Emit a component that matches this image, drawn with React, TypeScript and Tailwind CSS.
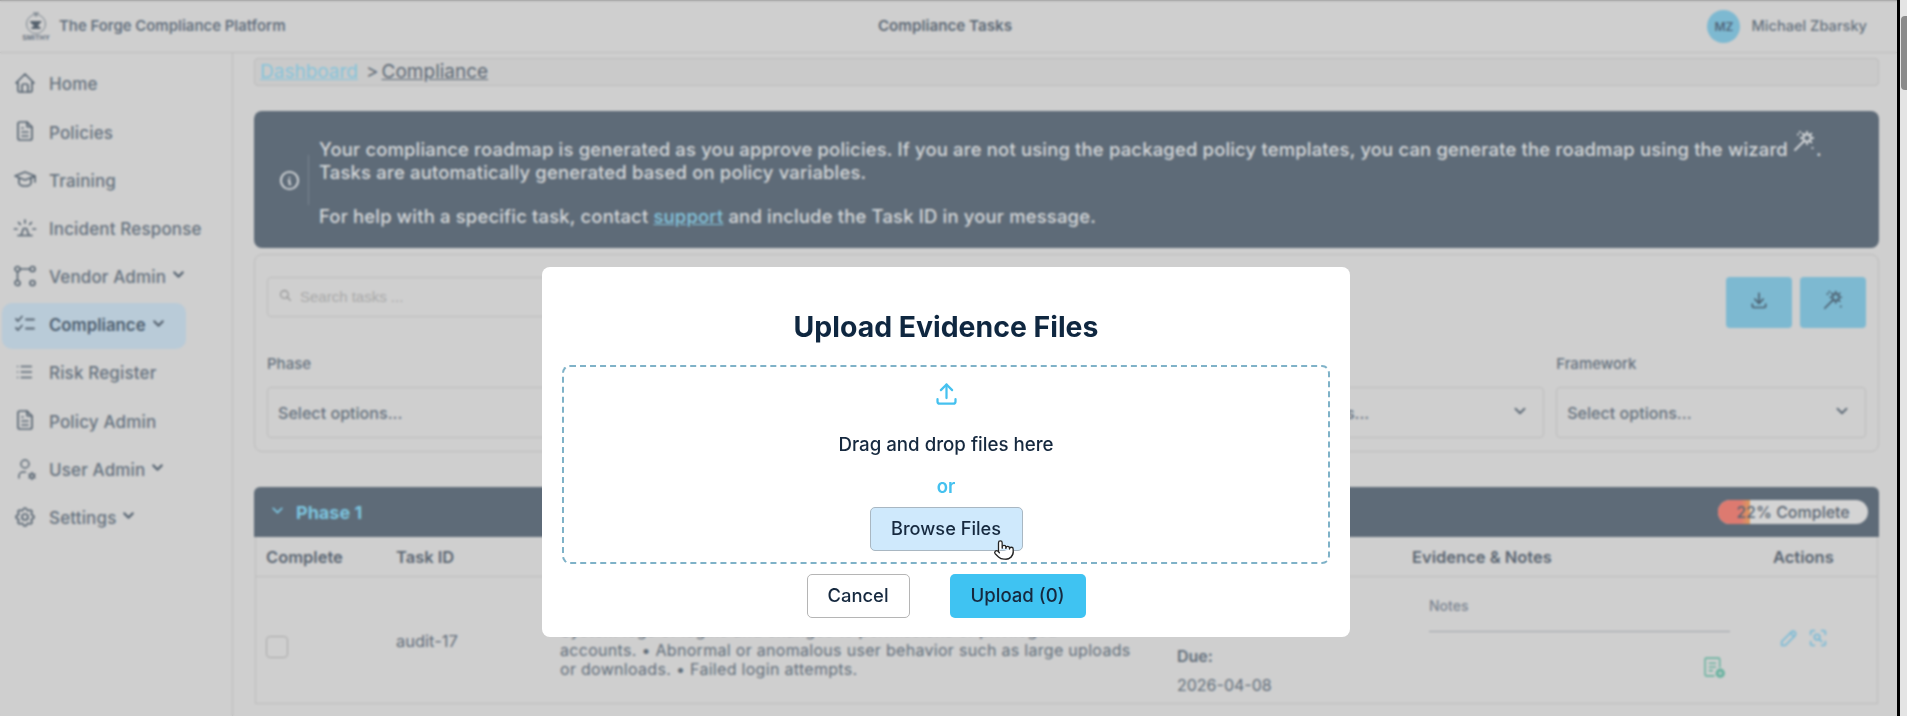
import React from 'react';
import { Pointer } from 'lucide-react';
import {
  TbChevronDown,
  TbDownload,
  TbFileText,
  TbHome,
  TbInfoCircle,
  TbList,
  TbPencil,
  TbSchool,
  TbSearch,
  TbSettings,
  TbUpload,
  TbUserCog,
  TbZoomScan,
} from 'react-icons/tb';

const FONT = "font-['Inter','Noto_Sans',sans-serif]";

function RouteIcon({ size = 24 }: { size?: number }) {
  return (
    <svg width={size} height={size} viewBox="0 0 24 24" fill="none" stroke="currentColor" strokeWidth="1.7">
      <circle cx="4.5" cy="5" r="2.5" />
      <circle cx="19.5" cy="5" r="2.5" />
      <circle cx="4.5" cy="19" r="2.5" />
      <circle cx="19.5" cy="19" r="2.5" />
      <path d="M7 5h10M4.5 7.5v9" />
    </svg>
  );
}

function SirenIcon() {
  return (
    <svg width="24" height="24" viewBox="0 0 24 24" fill="none" stroke="currentColor" strokeWidth="1.7" strokeLinecap="round">
      <path d="M1.5 13h2.5M20 13h2.5M12 4v3M5.5 6.5l1.8 1.8M18.5 6.5l-1.8 1.8M5 19.5h14M8 19.5l2.5-7h3l2.5 7" />
    </svg>
  );
}

function ChecksIcon() {
  return (
    <svg width="24" height="24" viewBox="0 0 24 24" fill="none" stroke="currentColor" strokeWidth="1.8" strokeLinecap="round" strokeLinejoin="round">
      <path d="M3 7l2 2 4-4.5M3 16l2 2 4-4.5M13 7.5h8M13 16.5h8" />
    </svg>
  );
}

function WandIcon({ size = 22 }: { size?: number }) {
  return (
    <svg width={size} height={size} viewBox="0 0 24 24" fill="none" stroke="currentColor" strokeWidth="1.4" strokeLinecap="round" strokeLinejoin="round">
      <path d="M3 21l8.5-8.5" strokeWidth="1.8" />
      <path d="M15 2.5l1.07 3.91 3.53-2.01-2.01 3.53 3.91 1.07-3.91 1.07 2.01 3.53-3.53-2.01-1.07 3.91-1.07-3.91-3.53 2.01 2.01-3.53-3.91-1.07 3.91-1.07-2.01-3.53 3.53 2.01z" />
      <path d="M6 5.5h.01M20.5 19h.01M8 3h.01" strokeWidth="2.2" />
    </svg>
  );
}

function SmithyLogo() {
  return (
    <div className="flex w-[26px] flex-col items-center">
      <svg width="24" height="24" viewBox="0 0 24 24" fill="none" stroke="#66727f" strokeWidth="1">
        <circle cx="12" cy="13" r="9.5" strokeWidth="0.8" />
        <path d="M9 2h6M12 2v4" />
        <path d="M6 10h12l-3.5 4v2h2v2h-9v-2h2v-2c-1.5-.5-3-2-3.5-4z" fill="#56626e" stroke="none" />
      </svg>
      <span className="-mt-[1px] text-[7px] leading-[8px] font-bold tracking-[0.2px] text-[#66727f] font-['Liberation_Sans_Narrow','Liberation_Sans',sans-serif]">
        SMITHY
      </span>
    </div>
  );
}

function NoteIcon() {
  return (
    <svg width="23" height="23" viewBox="0 0 22 22" fill="none" stroke="#69b3a0" strokeWidth="1.5">
      <path d="M16 11V3a1 1 0 0 0-1-1H3a1 1 0 0 0-1 1v15a1 1 0 0 0 1 1h8" />
      <path d="M5.5 7h7M5.5 10.5h7M5.5 14h4" />
      <circle cx="16.5" cy="16.5" r="4.5" fill="#69b3a0" stroke="none" />
      <path d="M16.5 14.5v4M14.5 16.5h4" stroke="#cfcfcf" strokeWidth="1" />
    </svg>
  );
}

const NAV = [
  { label: 'Home', icon: <TbHome size={24} strokeWidth={1.7} /> },
  { label: 'Policies', icon: <TbFileText size={24} strokeWidth={1.7} /> },
  { label: 'Training', icon: <TbSchool size={24} strokeWidth={1.7} /> },
  { label: 'Incident Response', icon: <SirenIcon /> },
  { label: 'Vendor Admin', icon: <RouteIcon />, caret: true },
  { label: 'Compliance', icon: <ChecksIcon />, caret: true, active: true },
  { label: 'Risk Register', icon: <TbList size={22} strokeWidth={1.7} /> },
  { label: 'Policy Admin', icon: <TbFileText size={24} strokeWidth={1.7} /> },
  { label: 'User Admin', icon: <TbUserCog size={24} strokeWidth={1.5} />, caret: true },
  { label: 'Settings', icon: <TbSettings size={24} strokeWidth={1.7} />, caret: true },
];

const FILTERS = ['Phase', 'Status', 'Owner', 'Category', 'Framework'];

function Sidebar() {
  return (
    <aside className="flex w-[233px] shrink-0 flex-col border-r border-[#bcbcbc] pt-[8px] pl-[2px]">
      {NAV.map((item) => (
        <div key={item.label} className="flex h-[48.2px] items-center">
          <div
            className={`flex h-[46px] items-center rounded-[10px] pl-[11px] pr-[19px] ${
              item.active ? 'bg-[#b9cbd8] font-semibold text-[#4d5e6f]' : 'font-medium text-[#66727e]'
            }`}
          >
            <span className="-mt-[4px] flex w-[36px] shrink-0 text-[#5a6774]">{item.icon}</span>
            <span className={`whitespace-nowrap ${item.active ? 'text-[16.8px]' : 'text-[17px] tracking-[0.15px]'}`}>{item.label}</span>
            {item.caret && <TbChevronDown size={17} strokeWidth={3} className="mb-[6px] ml-[4px] text-[#5a6774]" />}
          </div>
        </div>
      ))}
    </aside>
  );
}

function AlertBanner() {
  return (
    <div className="mt-[25px] flex h-[137px] rounded-[8px] bg-[#5e6b78] pt-[27px] pl-[26px] text-[18.4px] leading-[23px] font-medium tracking-[0.2px] text-[#d5d8da]">
      <div className="mt-[17px] flex h-[50px] w-[29px] shrink-0 items-center border-r border-[#79858f]">
        <TbInfoCircle size={23} className="-ml-[2px]" />
      </div>
      <div className="pl-[10px]">
        <p className="flex h-[23px] items-start whitespace-nowrap">
          Your compliance roadmap is generated as you approve policies. If you are not using the packaged policy templates, you can generate the roadmap using the wizard
          <span className="-mt-[9px] ml-[4px] flex">
            <WandIcon size={24} />
          </span>
          <span>.</span>
        </p>
        <p>Tasks are automatically generated based on policy variables.</p>
        <p className="mt-[21px]">
          For help with a specific task, contact <span className="text-[#83c3dc] underline">support</span> and include the Task ID in your message.
        </p>
      </div>
    </div>
  );
}

function FilterCard() {
  return (
    <div className="mt-[6px] h-[198px] rounded-[8px] border border-[#bcbcbc] px-[12px] pt-[22px]">
      <div className="flex items-start justify-between">
        <div className="flex h-[40px] w-[400px] items-center rounded-[4px] border border-[#bcbcbc] pl-[11px] text-[15px] text-[#a9a9a9] font-['Liberation_Sans',sans-serif]">
          <TbSearch size={13} className="mr-[8px] mb-[3px] text-[#8c8c8c]" />
          Search tasks ...
        </div>
        <div className="flex gap-[8px]">
          <div className="flex h-[51px] w-[66px] items-center justify-center rounded-[4px] bg-[#7db9d1] pb-[5px] text-[#4d6070]">
            <TbDownload size={20} />
          </div>
          <div className="flex h-[51px] w-[66px] items-center justify-center rounded-[4px] bg-[#7db9d1] pb-[5px] text-[#4d6070]">
            <WandIcon size={22} />
          </div>
        </div>
      </div>
      <div className="mt-[24px] grid grid-cols-5 gap-x-[12.5px]">
        {FILTERS.map((name) => (
          <div key={name}>
            <div className="h-[24px] text-[15px] font-medium leading-[24px] text-[#66727e]">{name}</div>
            <div className="mt-[11px] flex h-[51px] items-center justify-between rounded-[4px] border border-[#bcbcbc] pt-[1px] pr-[14px] pl-[10px] text-[16.1px] font-medium text-[#66727e]">
              Select options...
              <TbChevronDown size={18} strokeWidth={2.5} className="mb-[4px] text-[#5f6c79]" />
            </div>
          </div>
        ))}
      </div>
    </div>
  );
}

function PhaseTable() {
  const cols = 'grid grid-cols-[130px_164px_617px_235px_361px_1fr] px-[10px]';
  return (
    <div className="mt-[35px]">
      <div className="flex h-[50px] items-center justify-between rounded-t-[6px] bg-[#5e6b78] pr-[11px] pl-[15px]">
        <div className="flex items-center">
          <TbChevronDown size={17} strokeWidth={2.5} className="mb-[3px] text-[#7cc4df]" />
          <span className="ml-[10px] text-[18px] font-bold text-[#7cc4df]">Phase 1</span>
        </div>
        <div className="relative h-[24px] w-[150px] overflow-hidden rounded-full bg-[#d4d4d4]">
          <div className="h-full w-[32px] bg-gradient-to-r from-[#dd7a70] from-70% to-[#dc9a5c]" />
          <div className="absolute inset-0 flex items-center justify-center text-[16px] font-medium text-[#5b6672]">22% Complete</div>
        </div>
      </div>
      <div className="mx-[1px] border-x border-[#bcbcbc]">
        <div className={`${cols} h-[40px] items-center border-b border-[#bcbcbc] pt-[2px] text-[16.5px] font-semibold text-[#5b6672]`}>
          <span>Complete</span>
          <span>Task ID</span>
          <span>Description</span>
          <span>Dates</span>
          <span>Evidence &amp; Notes</span>
          <span>Actions</span>
        </div>
        <div className={`${cols} h-[127px] border-b border-[#bcbcbc] text-[16px] text-[#626e7a]`}>
          <div className="pt-[59px]">
            <div className="h-[22px] w-[22px] rounded-[4px] border border-[#a9a9a9]" />
          </div>
          <div className="pt-[52px] text-[16.5px]">audit-17</div>
          <div className="pt-[44px] text-[16px] leading-[19.6px] tracking-[0.3px] whitespace-nowrap">
            <p>System logs of logins and changes to permissions of privileged</p>
            <p>accounts. • Abnormal or anomalous user behavior such as large uploads</p>
            <p>or downloads. • Failed login attempts.</p>
          </div>
          <div className="pt-[67px] text-[16px]">
            <div className="font-semibold">Due:</div>
            <div className="mt-[5px]">2026-04-08</div>
          </div>
          <div className="pt-[18px] pr-[43px] pl-[17px]">
            <div className="h-[37px] border-b border-[#9ea4aa] text-[14px] font-medium text-[#7b8591]">Notes</div>
            <div className="mt-[24px] flex justify-end pr-[4px]">
              <NoteIcon />
            </div>
          </div>
          <div className="flex gap-[7px] pt-[50px] pl-[5px] text-[#7fbcd6]">
            <TbPencil size={22} />
            <TbZoomScan size={22} />
          </div>
        </div>
      </div>
    </div>
  );
}

function UploadModal() {
  return (
    <div className="absolute top-[267px] left-[542px] flex h-[370px] w-[808px] flex-col items-center rounded-[8px] bg-white px-[20px] pt-[42px] blur-[0.3px]">
      <h2 className="text-[28.4px] leading-[36px] font-bold text-[#0f2740]">Upload Evidence Files</h2>
      <div className="mt-[20px] flex h-[199px] w-full flex-col items-center rounded-[8px] border-2 border-dashed border-[#7fb2c8] pt-[13px]">
        <TbUpload size={27} className="text-[#45c1ef]" />
        <div className="mt-[25px] text-[18.7px] leading-[26px] font-medium text-[#16293f]">Drag and drop files here</div>
        <div className="mt-[15px] text-[18.5px] leading-[26px] font-semibold text-[#45c1ef]">or</div>
        <div className="relative mt-[8px] flex h-[44px] w-[153px] items-center justify-center rounded-[5px] border border-[#a9b7c2] bg-[#cfe9fc] text-[18.2px] font-medium text-[#16293f]">
          Browse Files
          <Pointer size={22} fill="white" strokeWidth={1.4} className="absolute top-[31px] left-[122px] text-[#222]" />
        </div>
      </div>
      <div className="mt-[10px] flex gap-[40px]">
        <div className="flex h-[44px] w-[103px] items-center justify-center rounded-[5px] border border-[#b5b5b5] bg-white text-[18.4px] font-medium text-[#16293f]">
          Cancel
        </div>
        <div className="flex h-[44px] w-[136px] items-center justify-center rounded-[5px] bg-[#3fc3f2] text-[18.6px] font-medium text-[#16293f]">
          Upload (0)
        </div>
      </div>
    </div>
  );
}

export default function App() {
  return (
    <div className={`relative flex h-[716px] w-full overflow-hidden bg-[#cfcfcf] ${FONT}`}>
      <div className="flex min-w-0 flex-1 flex-col">
        <header className="grid h-[53px] shrink-0 grid-cols-3 items-center border-t border-b border-t-[#9c9c9c] border-b-[#bcbcbc] pr-[30px] pl-[23px]">
          <div className="flex items-center gap-[10px]">
            <SmithyLogo />
            <span className="text-[14.9px] font-semibold text-[#66727f]">The Forge Compliance Platform</span>
          </div>
          <div className="text-center text-[15.2px] font-semibold text-[#5d6975]">Compliance Tasks</div>
          <div className="flex items-center justify-end gap-[11px]">
            <div className="flex h-[33px] w-[33px] items-center justify-center rounded-full bg-[#7db9d1] text-[12px] font-semibold text-[#52687c]">MZ</div>
            <span className="text-[14.6px] font-medium text-[#66727e]">Michael Zbarsky</span>
          </div>
        </header>
        <div className="flex min-h-0 flex-1">
          <Sidebar />
          <main className="min-w-0 flex-1 pt-[5px] pr-[18px] pl-[21px]">
            <div className="flex h-[28px] items-center rounded-[4px] border border-[#bcbcbc] bg-[#cacaca] pl-[5px] text-[19px] text-[#5d6975]">
              <span className="text-[#86c4db] underline">Dashboard</span>
              <span className="ml-[8px]">&gt;</span>
              <span className="ml-[3px] underline">Compliance</span>
            </div>
            <AlertBanner />
            <FilterCard />
            <PhaseTable />
          </main>
        </div>
      </div>
      <div className="flex w-[10px] shrink-0 border-l-[3px] border-black bg-[#e4e4e4] pt-[16px] pl-[1px]">
        <div className="h-[74px] w-full rounded-l-[4px] bg-[#8a8a8a]" />
      </div>
      <div className="absolute inset-y-0 left-0 w-[1897px] backdrop-blur-[1.2px]" />
      <UploadModal />
    </div>
  );
}
